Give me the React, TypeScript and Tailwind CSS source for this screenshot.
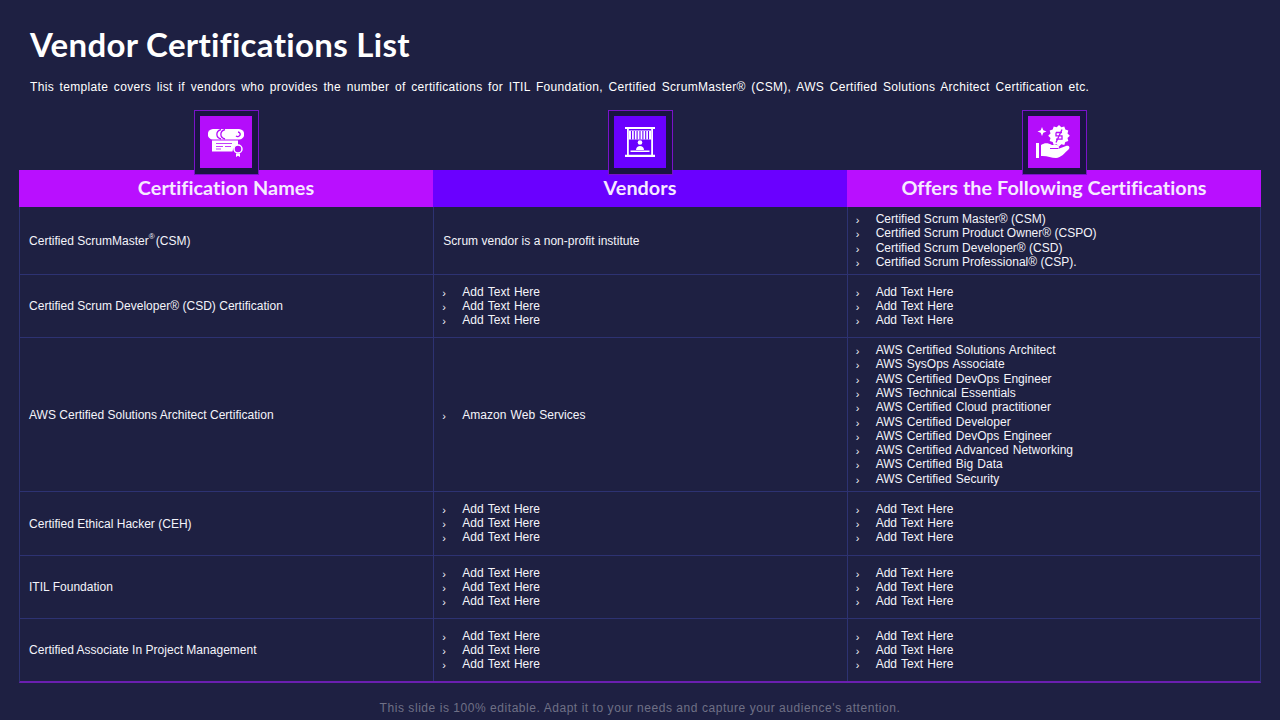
import React from 'react';

const addText = ['Add Text Here', 'Add Text Here', 'Add Text Here'];

const rows: { name: React.ReactNode; vendor: string | string[]; offers: string[]; h: string; nudge?: boolean }[] = [
  {
    name: <>Certified ScrumMaster<sup className="text-[8px] align-[3px] leading-none mr-[1px]">®</sup> (CSM)</>,
    vendor: 'Scrum vendor is a non-profit institute',
    offers: [
      'Certified Scrum Master® (CSM)',
      'Certified Scrum Product Owner® (CSPO)',
      'Certified Scrum Developer® (CSD)',
      'Certified Scrum Professional® (CSP).',
    ],
    h: 'h-[68px]',
  },
  { name: 'Certified Scrum Developer® (CSD) Certification', vendor: addText, offers: addText, h: 'h-[63px]' },
  {
    name: 'AWS Certified Solutions Architect Certification',
    vendor: ['Amazon Web Services'],
    offers: [
      'AWS Certified Solutions Architect',
      'AWS SysOps Associate',
      'AWS Certified DevOps Engineer',
      'AWS Technical Essentials',
      'AWS Certified Cloud practitioner',
      'AWS Certified Developer',
      'AWS Certified DevOps Engineer',
      'AWS Certified Advanced Networking',
      'AWS Certified Big Data',
      'AWS Certified Security',
    ],
    h: 'h-[154px]',
  },
  { name: 'Certified Ethical Hacker (CEH)', vendor: addText, offers: addText, h: 'h-[64px]', nudge: true },
  { name: 'ITIL Foundation', vendor: addText, offers: addText, h: 'h-[63px]' },
  { name: 'Certified Associate In Project Management', vendor: addText, offers: addText, h: 'h-[62px]' },
];

function Bullets({ items, nudge }: { items: string[]; nudge?: boolean }) {
  return (
    <ul className={`flex flex-col -ml-[1px] ${items.length === 1 ? 'pt-[1px]' : ''} ${nudge ? '-mt-[1px]' : ''}`}>
      {items.map((t, i) => (
        <li key={i} className={`flex items-center ${items.length === 3 ? 'h-[14px] leading-[14px]' : 'h-[14.3px] leading-[14.3px]'}`}>
          <span className="w-[20px] shrink-0 text-[11px] pt-[2px]">›</span>
          <span className={t.startsWith('Certified') ? '' : '[word-spacing:0.8px]'}>{t}</span>
        </li>
      ))}
    </ul>
  );
}

function CertIcon() {
  return (
    <svg viewBox="0 0 36 28" className="w-[36px] h-[28px] mt-[2px]" fill="#fff">
      <path d="M5 0h26a5 5 0 0 1 0 10.500H5a5.200 5.200 0 0 1 0-10.500z" />
      <path d="M13 .5a6 5 0 0 0 0 9.500M17 .5a6 5 0 0 0 0 9.500M30 3a2.500 2.300 0 1 1-2 4" fill="none" stroke="#b40dfb" strokeWidth="1.300" />
      <path d="M4 11.500h26v5a6 6 0 0 0-5.500 6H4z" />
      <path d="M8 14.500h16M8 17.500h7M17 17.500h6M8 20h5" stroke="#b40dfb" strokeWidth="0.800" />
      <circle cx="30" cy="20" r="4" stroke="#fff" strokeWidth="1.500" fill="#b40dfb" />
      <path d="M28 24.500h4V28l-2-1.200-2 1.200z" />
    </svg>
  );
}

function StallIcon() {
  return (
    <svg viewBox="0 0 30 30" className="w-[30px] h-[30px]" fill="#fff">
      <path d="M0 0h30v2H0zM2 2h1.800v26H2zM26.200 2H28v26h-1.800zM0 27.800h30V30H0z" />
      <path d="M4 3.500h22v6.500l.5 2.500h-23L4 10z" />
      <path d="M6.500 4v8.500M9.300 4v8.500M12.100 4v8.500M15 4v8.500M17.900 4v8.500M20.700 4v8.500M23.500 4v8.500" stroke="#6a00ff" strokeWidth="1.100" />
      <circle cx="15" cy="15.500" r="2.300" />
      <path d="M11 23c0-5.500 8-5.500 8 0z" />
      <path d="M5.500 23.500h19V25h-19z" />
    </svg>
  );
}

function HandIcon() {
  return (
    <svg viewBox="0 0 36 34" className="w-[36px] h-[34px]" fill="#fff">
      <path d="M23 0l2.300 2.300 3-.8 1 3 3 1-.8 3 2.300 2.300-2.300 2.300.8 3-3 1-1 3-3-.8-2.300 2.300-2.300-2.300-3 .8-1-3-3-1 .8-3-2.300-2.300 2.300-2.300-.8-3 3-1 1-3 3 .8z" />
      <path d="M20 7.500h6M20 7.500v3.300h6v3.400h-6M26 4.500l-6 13" stroke="#b40dfb" strokeWidth="1.300" fill="none" />
      <path d="M6 2l1.300 3.200L10.500 6.500 7.300 7.800 6 11 4.700 7.800 1.500 6.500l3.200-1.300z" />
      <path d="M0 18h3v15H0z" />
      <path d="M5 20c4-2.500 7-2 11 0h5a2 2 0 0 1 0 4h-5 6l8-3c3-1 4.500 1.500 2.500 3.500C29 27.500 25 33 20 33c-5 0-9-2.500-15-2z" />
      <path d="M14 23.500h8" stroke="#b40dfb" strokeWidth="1" />
    </svg>
  );
}

function IconBox({ bg, children }: { bg: string; children: React.ReactNode }) {
  return (
    <div className="w-[65px] h-[65px] border border-[#7a12c9] bg-[#1a1442] flex items-start justify-center pt-[5px]">
      <div className={`w-[52px] h-[52px] flex items-center justify-center ${bg}`}>{children}</div>
    </div>
  );
}

const cellBase = 'flex items-center border-[#2d3272] pl-[9px]';

export default function App() {
  return (
    <div
      className="w-[1280px] h-[720px] overflow-hidden bg-[#1e2042] text-[#f4f4fa] flex flex-col"
      style={{ fontFamily: '"Liberation Sans", Arial, sans-serif' }}
    >
      <div className="pl-[30px] pt-[24px]">
        <h1 className="text-[33px] leading-[40px] font-bold text-white tracking-[0.32px]" style={{ fontFamily: 'Lato, sans-serif' }}>
          Vendor Certifications List
        </h1>
        <p className="mt-[15px] text-[12px] leading-[16px] text-white whitespace-nowrap tracking-[0.32px] [word-spacing:2px]">
          This template covers list if vendors who provides the number of certifications for ITIL Foundation, Certified ScrumMaster® (CSM), AWS Certified Solutions Architect Certification etc.
        </p>
      </div>

      <div className="mx-[19px] mt-[15px] relative z-10 -mb-[5px] grid grid-cols-3 justify-items-center">
        <IconBox bg="bg-[#b40dfb]"><CertIcon /></IconBox>
        <IconBox bg="bg-[#6a00ff]"><StallIcon /></IconBox>
        <IconBox bg="bg-[#b40dfb]"><HandIcon /></IconBox>
      </div>

      <div className="mx-[19px] w-[1242px]">
        <div
          className="grid grid-cols-3 h-[37px] text-[19.8px] font-bold text-[#f6eaff] tracking-[0.05px]"
          style={{ fontFamily: 'Lato, sans-serif' }}
        >
          <div className="flex items-center justify-center bg-[#b90fff] pb-[2px]">Certification Names</div>
          <div className="flex items-center justify-center bg-[#6a00ff] pb-[2px]">Vendors</div>
          <div className="flex items-center justify-center bg-[#b90fff] pb-[2px]">Offers the Following Certifications</div>
        </div>
        <div className="border-x border-[#2d3272] border-b-2 border-b-[#6a1fb0] text-[12px] tracking-[0.02px]">
          {rows.map((r, i) => (
            <div
              key={i}
              className={`grid grid-cols-3 ${r.h} ${i < rows.length - 1 ? 'border-b border-[#2d3272]' : ''}`}
            >
              <div className={cellBase}>{r.name}</div>
              <div className={`${cellBase} border-l`}>
                {typeof r.vendor === 'string' ? r.vendor : <Bullets items={r.vendor} nudge={r.nudge} />}
              </div>
              <div className={`${cellBase} border-l`}>
                <Bullets items={r.offers} nudge={r.nudge} />
              </div>
            </div>
          ))}
        </div>
      </div>

      <p className="mt-[17px] text-center text-[12px] leading-[16px] text-[#6f7086] tracking-[0.55px]">
        This slide is 100% editable. Adapt it to your needs and capture your audience's attention.
      </p>
    </div>
  );
}
